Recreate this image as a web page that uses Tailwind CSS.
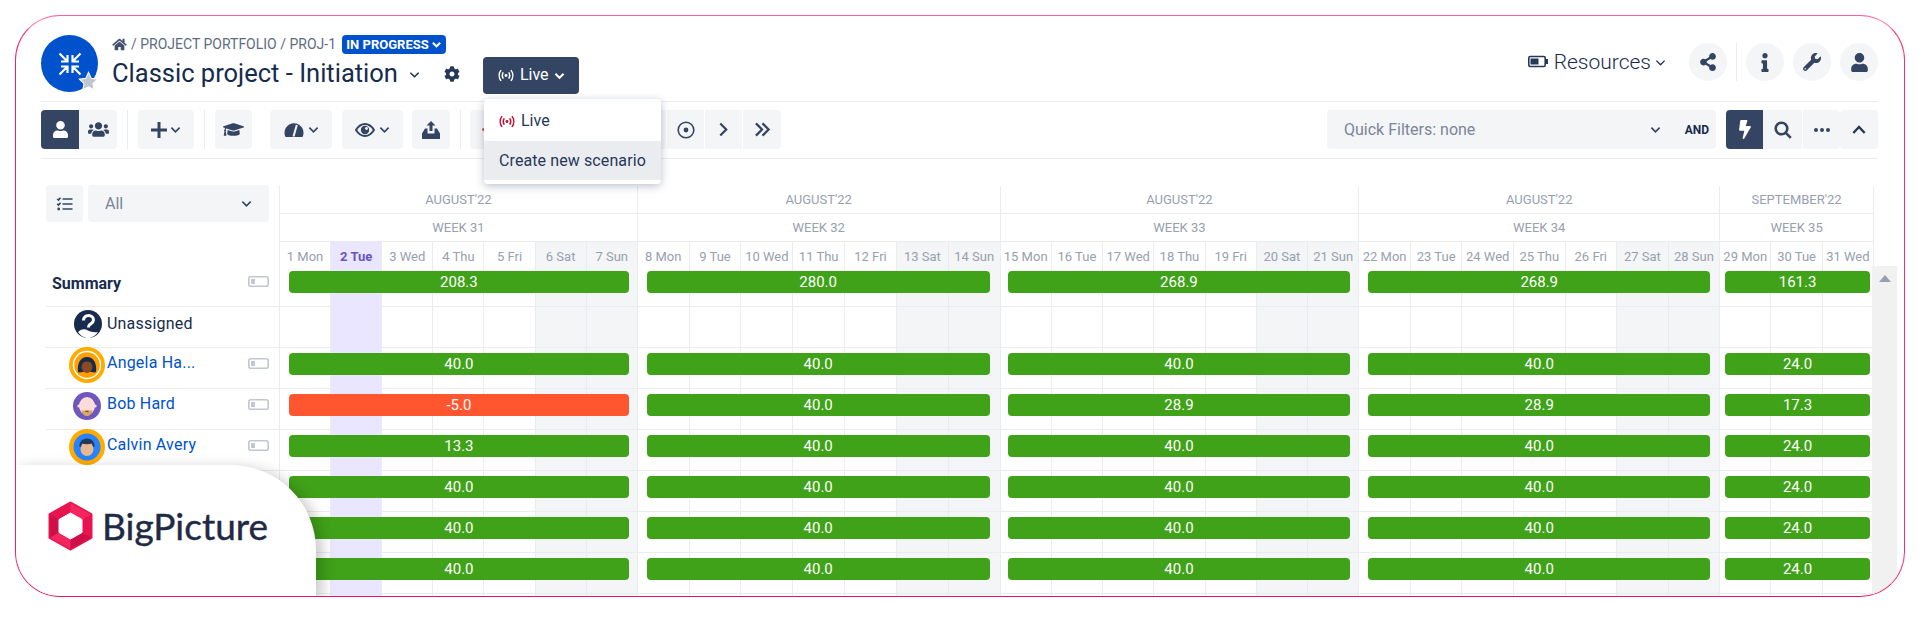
<!DOCTYPE html>
<html lang="en">
<head>
  <meta charset="UTF-8" />
  <title>Classic project - Initiation</title>
  <script src="https://cdn.jsdelivr.net/npm/@tailwindcss/browser@4"></script>
</head>
<body class="bg-white h-screen overflow-hidden font-['Roboto',sans-serif] text-[#172b4d]">

<!-- frame -->
<div class="relative ml-[15px] mt-[15px] w-[1890px] h-[582px] rounded-[45px] border border-t-[#ff5f96] border-l-[#f0206a] border-r-[#f42e76] border-b-[#ec1462] overflow-hidden">
  <div class="pl-[25px] pr-[26px]">

    <!-- top header -->
    <header class="h-[86px] border-b border-[#ebecf0] flex justify-between">
      <div class="flex pt-[19px]">
        <div class="relative w-[57px] h-[57px] rounded-full bg-[#0052cc] flex items-center justify-center">
          <svg viewBox="0 0 24 24" class="w-[24px] h-[24px]" fill="none" stroke="#fff" stroke-width="2.2">
            <path d="M1.500 1.500l7 7M9.500 3v6.500H3M22.500 1.500l-7 7M14.500 3v6.500H21M1.500 22.500l7-7M9.500 21v-6.500H3M22.500 22.500l-7-7M14.500 21v-6.500H21"/>
          </svg>
          <svg viewBox="0 0 24 24" class="absolute -right-[1px] bottom-[0px] w-[21px] h-[21px]"><path d="M12 1.500l3.200 6.900 7.300.9-5.400 5.100 1.400 7.400-6.500-3.700-6.500 3.700 1.400-7.400L1.500 9.300l7.300-.9z" fill="#c1c7d0" stroke="#fff" stroke-width="1.200"/></svg>
        </div>
        <div class="ml-[14px]">
          <div class="flex items-center h-[19px] text-[14px] text-[#5e6c84]">
            <svg viewBox="0 0 576 512" class="w-[15px] h-[13px] shrink-0" fill="#42526e"><path d="M280.37 148.26L96 300.11V464a16 16 0 0 0 16 16l112.06-.29a16 16 0 0 0 15.92-16V368a16 16 0 0 1 16-16h64a16 16 0 0 1 16 16v95.64a16 16 0 0 0 16 16.05L464 480a16 16 0 0 0 16-16V300L295.67 148.26a12.19 12.19 0 0 0-15.3 0zM571.6 251.47L488 182.56V44.05a12 12 0 0 0-12-12h-56a12 12 0 0 0-12 12v72.61L318.47 43a48 48 0 0 0-61 0L4.34 251.47a12 12 0 0 0-1.6 16.9l25.5 31A12 12 0 0 0 45.15 301l235.22-193.74a12.19 12.19 0 0 1 15.3 0L530.9 301a12 12 0 0 0 16.9-1.6l25.5-31a12 12 0 0 0-1.7-16.93z"/></svg>
            <span class="ml-[4px] whitespace-nowrap">/ PROJECT PORTFOLIO / PROJ-1</span>
            <span class="ml-[6px] h-[19px] w-[104px] shrink-0 rounded-[4px] bg-[#0052cc] text-white text-[13px] font-bold flex items-center justify-center gap-[2px] whitespace-nowrap">IN PROGRESS
              <svg viewBox="0 0 12 12" class="w-[11px] h-[11px]" fill="none" stroke="#fff" stroke-width="2.200"><path d="M2 4l4 4 4-4"/></svg>
            </span>
          </div>
          <div class="flex items-center h-[38px] mt-[2px]">
            <span class="text-[25.500px] leading-none whitespace-nowrap -mt-[2px]">Classic project - Initiation</span>
            <svg viewBox="0 0 12 12" class="ml-[11px] -mt-[2px] w-[11px] h-[11px]" fill="none" stroke="#172b4d" stroke-width="1.600"><path d="M1.500 4l4.500 4.500L10.500 4"/></svg>
            <svg viewBox="0 0 512 512" class="ml-[24px] -mt-[2px] w-[16px] h-[16px]" fill="#253858"><path d="M487.4 315.7l-42.6-24.6c4.3-23.2 4.3-47 0-70.2l42.6-24.6c4.9-2.8 7.1-8.6 5.5-14-11.1-35.6-30-67.8-54.7-94.6-3.8-4.1-10-5.1-14.8-2.3L380.8 110c-17.9-15.4-38.5-27.3-60.8-35.1V25.8c0-5.6-3.9-10.5-9.4-11.7-36.7-8.2-74.3-7.8-109.2 0-5.5 1.2-9.4 6.1-9.4 11.7V75c-22.2 7.9-42.8 19.8-60.8 35.1L88.7 85.5c-4.9-2.8-11-1.9-14.8 2.3-24.7 26.7-43.6 58.9-54.7 94.6-1.7 5.4.6 11.2 5.5 14L67.3 221c-4.3 23.2-4.3 47 0 70.2l-42.6 24.6c-4.9 2.8-7.1 8.6-5.5 14 11.1 35.6 30 67.8 54.7 94.6 3.8 4.1 10 5.1 14.8 2.3l42.6-24.6c17.9 15.4 38.5 27.3 60.8 35.1v49.2c0 5.6 3.9 10.5 9.4 11.7 36.7 8.2 74.3 7.8 109.2 0 5.5-1.2 9.4-6.1 9.4-11.7v-49.2c22.2-7.9 42.8-19.8 60.8-35.1l42.6 24.6c4.9 2.8 11 1.9 14.8-2.3 24.7-26.7 43.6-58.9 54.7-94.6 1.5-5.5-.7-11.3-5.6-14.1zM256 336c-44.1 0-80-35.9-80-80s35.9-80 80-80 80 35.9 80 80-35.9 80-80 80z"/></svg>
            <div class="relative ml-[23px] h-[37px] w-[96px] shrink-0 rounded-[4px] bg-[#344563] text-white flex items-center pl-[14px] gap-[5px]">
              <svg viewBox="0 0 20 14" class="w-[18px] h-[13px]" fill="none" stroke="#fff" stroke-width="1.700"><path d="M4.500 1C1.800 4.500 1.800 9.500 4.500 13M15.500 1c2.700 3.500 2.700 8.500 0 12M7 3.500c-1.300 2-1.300 5 0 7M13 3.500c1.300 2 1.300 5 0 7"/><circle cx="10" cy="7" r="1.600" fill="#fff" stroke="none"/></svg>
              <span class="text-[16px] leading-none">Live</span>
              <svg viewBox="0 0 12 12" class="w-[11px] h-[11px]" fill="none" stroke="#fff" stroke-width="2.200"><path d="M1.500 4l4.500 4.500L10.500 4"/></svg>
            </div>
          </div>
        </div>
      </div>

      <div class="flex items-start pt-[27px]">
        <svg viewBox="0 0 20 12" class="w-[20px] h-[13px] mt-[12px]" fill="none"><rect x="0.800" y="1" width="16.400" height="10" rx="1.500" stroke="#253858" stroke-width="1.600"/><rect x="2.500" y="3" width="8" height="6" fill="#253858"/><rect x="18" y="3.500" width="2" height="5" fill="#253858"/></svg>
        <span class="ml-[6px] text-[21px] leading-[38px] font-light">Resources</span>
        <svg viewBox="0 0 12 12" class="ml-[4px] mt-[14px] w-[11px] h-[11px]" fill="none" stroke="#172b4d" stroke-width="1.400"><path d="M1.500 4l4.500 4.500L10.500 4"/></svg>
        <div class="ml-[23px] w-[38px] h-[38px] rounded-full bg-[#f4f5f7] flex items-center justify-center">
          <svg viewBox="0 0 448 512" class="w-[16px] h-[18px]" fill="#344563"><path d="M352 320c-22.608 0-43.387 7.819-59.79 20.895l-102.486-64.054a96.551 96.551 0 0 0 0-41.683l102.486-64.054C308.613 184.181 329.392 192 352 192c53.019 0 96-42.981 96-96S405.019 0 352 0s-96 42.981-96 96c0 7.158.79 14.13 2.276 20.841L155.79 180.895C139.387 167.819 118.608 160 96 160c-53.019 0-96 42.981-96 96s42.981 96 96 96c22.608 0 43.387-7.819 59.79-20.895l102.486 64.054A96.301 96.301 0 0 0 256 416c0 53.019 42.981 96 96 96s96-42.981 96-96-42.981-96-96-96z"/></svg>
        </div>
        <div class="ml-[9px] w-px h-[38px] bg-[#ebecf0]"></div>
        <div class="ml-[9px] w-[38px] h-[38px] rounded-full bg-[#f4f5f7] flex items-center justify-center">
          <svg viewBox="0 0 192 512" class="w-[8px] h-[19px]" fill="#344563"><path d="M20 424.229h20V279.771H20c-11.046 0-20-8.954-20-20V212c0-11.046 8.954-20 20-20h112c11.046 0 20 8.954 20 20v212.229h20c11.046 0 20 8.954 20 20V492c0 11.046-8.954 20-20 20H20c-11.046 0-20-8.954-20-20v-47.771c0-11.046 8.954-20 20-20zM96 0C56.235 0 24 32.235 24 72s32.235 72 72 72 72-32.235 72-72S135.764 0 96 0z"/></svg>
        </div>
        <div class="ml-[9px] w-[38px] h-[38px] rounded-full bg-[#f4f5f7] flex items-center justify-center">
          <svg viewBox="0 0 512 512" class="w-[18px] h-[18px]" fill="#344563"><path d="M507.73 109.1c-2.24-9.03-13.54-12.09-20.12-5.51l-74.36 74.36-67.88-11.31-11.31-67.88 74.36-74.36c6.62-6.62 3.43-17.9-5.66-20.16-47.38-11.74-99.55.91-136.58 37.93-39.64 39.64-50.55 97.1-34.05 147.2L18.74 402.76c-24.99 24.99-24.99 65.51 0 90.5 24.99 24.99 65.51 24.99 90.5 0l213.21-213.21c50.12 16.71 107.47 5.68 147.37-34.22 37.07-37.07 49.7-89.32 37.91-136.73zM64 472c-13.25 0-24-10.75-24-24 0-13.26 10.75-24 24-24s24 10.74 24 24c0 13.25-10.75 24-24 24z"/></svg>
        </div>
        <div class="ml-[9px] w-[38px] h-[38px] rounded-full bg-[#f4f5f7] flex items-center justify-center">
          <svg viewBox="0 0 448 512" class="w-[17px] h-[19px]" fill="#344563"><path d="M224 256c70.7 0 128-57.3 128-128S294.7 0 224 0 96 57.3 96 128s57.3 128 128 128zm89.6 32h-16.7c-22.2 10.2-46.9 16-72.9 16s-50.6-5.8-72.9-16h-16.7C60.2 288 0 348.2 0 422.4V464c0 26.5 21.5 48 48 48h352c26.5 0 48-21.5 48-48v-41.6c0-74.2-60.2-134.4-134.4-134.4z"/></svg>
        </div>
      </div>
    </header>

    <!-- toolbar -->
    <div class="relative h-[57px] border-b border-[#ebecf0] flex justify-between pt-[8px]">
      <div class="flex h-[39px]">
        <div class="w-[38px] bg-[#344563] rounded-l-[4px] flex items-center justify-center">
          <svg viewBox="0 0 448 512" class="w-[15px] h-[19px]" fill="#fff"><path d="M224 256c70.7 0 128-57.3 128-128S294.7 0 224 0 96 57.3 96 128s57.3 128 128 128zm89.6 32h-16.7c-22.2 10.2-46.9 16-72.9 16s-50.6-5.8-72.9-16h-16.7C60.2 288 0 348.2 0 422.4V464c0 26.5 21.5 48 48 48h352c26.5 0 48-21.5 48-48v-41.6c0-74.2-60.2-134.4-134.4-134.4z"/></svg>
        </div>
        <div class="w-[38px] bg-[#f4f5f7] rounded-r-[4px] flex items-center justify-center">
          <svg viewBox="0 0 640 512" class="w-[21px] h-[17px]" fill="#344563"><path d="M96 224c35.3 0 64-28.7 64-64s-28.7-64-64-64-64 28.7-64 64 28.7 64 64 64zm448 0c35.3 0 64-28.7 64-64s-28.7-64-64-64-64 28.7-64 64 28.7 64 64 64zm32 32h-64c-17.6 0-33.5 7.1-45.1 18.6 40.3 22.1 68.9 62 75.1 109.4h66c17.7 0 32-14.3 32-32v-32c0-35.3-28.7-64-64-64zm-256 0c61.9 0 112-50.1 112-112S381.9 32 320 32 208 82.1 208 144s50.1 112 112 112zm76.8 32h-8.3c-20.8 10-43.9 16-68.5 16s-47.6-6-68.5-16h-8.3C179.6 288 128 339.6 128 403.2V432c0 26.5 21.5 48 48 48h288c26.5 0 48-21.5 48-48v-28.8c0-63.6-51.6-115.2-115.2-115.2zm-223.7-13.4C161.5 263.1 145.6 256 128 256H64c-35.3 0-64 28.7-64 64v32c0 17.7 14.3 32 32 32h65.9c6.3-47.4 34.9-87.3 75.2-109.4z"/></svg>
        </div>
        <div class="ml-[10px] w-px bg-[#ebecf0]"></div>
        <div class="ml-[10px] w-[56px] rounded-[4px] bg-[#f4f5f7] flex items-center justify-center gap-[3px]">
          <svg viewBox="0 0 16 16" class="w-[16px] h-[16px]" fill="none" stroke="#344563" stroke-width="3"><path d="M8 0v16M0 8h16"/></svg>
          <svg viewBox="0 0 12 12" class="w-[11px] h-[11px]" fill="none" stroke="#344563" stroke-width="1.800"><path d="M1.500 4l4.500 4.500L10.500 4"/></svg>
        </div>
        <div class="ml-[10px] w-px bg-[#ebecf0]"></div>
        <div class="ml-[10px] w-[37px] rounded-[4px] bg-[#f4f5f7] flex items-center justify-center">
          <svg viewBox="0 0 640 512" class="w-[21px] h-[17px]" fill="#344563"><path d="M622.34 153.2L343.4 67.5c-15.2-4.67-31.6-4.67-46.79 0L17.66 153.2c-23.54 7.23-23.54 38.36 0 45.59l48.63 14.94c-10.67 13.19-17.23 29.28-17.88 46.9C38.78 266.15 32 276.11 32 288c0 10.78 5.68 19.85 13.86 25.65L20.33 428.53C18.11 438.52 25.71 448 35.94 448h56.11c10.24 0 17.84-9.48 15.62-19.47L82.14 313.65C90.32 307.85 96 298.78 96 288c0-11.57-6.47-21.25-15.66-26.87.76-15.02 8.44-28.3 20.69-36.72L296.6 284.5c9.06 2.78 26.44 6.25 46.79 0l278.95-85.7c23.55-7.24 23.55-38.36 0-45.6zM352.79 315.09c-28.53 8.76-52.84 3.92-65.59 0l-145.02-44.55L128 384c0 35.35 85.96 64 192 64s192-28.65 192-64l-14.18-113.47-145.03 44.56z"/></svg>
        </div>
        <div class="ml-[18px] w-[62px] rounded-[4px] bg-[#f4f5f7] flex items-center justify-center gap-[4px]">
          <svg viewBox="0 0 20 15" class="w-[20px] h-[15px]"><path d="M1.500 15A9.500 9.500 0 1 1 18.500 15Z" fill="#344563"/><path d="M9.500 14.500L12.800 3" stroke="#f4f5f7" stroke-width="2"/></svg>
          <svg viewBox="0 0 12 12" class="w-[11px] h-[11px]" fill="none" stroke="#344563" stroke-width="1.800"><path d="M1.500 4l4.500 4.500L10.500 4"/></svg>
        </div>
        <div class="ml-[10px] w-[61px] rounded-[4px] bg-[#f4f5f7] flex items-center justify-center gap-[4px]">
          <svg viewBox="0 0 20 14" class="w-[20px] h-[14px]" fill="none"><path d="M1 7c2.500-4 5.500-6 9-6s6.500 2 9 6c-2.500 4-5.500 6-9 6S3.500 11 1 7z" stroke="#344563" stroke-width="2"/><circle cx="10" cy="7" r="4.200" fill="#344563"/><circle cx="11.500" cy="5.500" r="1.400" fill="#f4f5f7"/></svg>
          <svg viewBox="0 0 12 12" class="w-[11px] h-[11px]" fill="none" stroke="#344563" stroke-width="1.800"><path d="M1.500 4l4.500 4.500L10.500 4"/></svg>
        </div>
        <div class="ml-[9px] w-[38px] rounded-[4px] bg-[#f4f5f7] flex items-center justify-center">
          <svg viewBox="0 0 18 18" class="w-[18px] h-[18px]" fill="#344563"><path d="M9 0l4.500 4.500h-3v5.500h-3V4.500h-3z"/><path d="M3 7.500h2.500V12.500h7V7.500H15l3 5V18H0v-5.500z"/></svg>
        </div>
        <div class="ml-[10px] w-px bg-[#ebecf0]"></div>
        <div class="ml-[9px] w-[196px] rounded-l-[4px] bg-[#f4f5f7] flex items-center pl-[12px]">
          <span class="w-[3px] h-[3px] rounded-full bg-[#e5553b]"></span>
        </div>
        <div class="ml-[1px] w-[37px] bg-[#f4f5f7] flex items-center justify-center">
          <svg viewBox="0 0 18 18" class="w-[18px] h-[18px]" fill="none" stroke="#344563" stroke-width="1.600"><circle cx="9" cy="9" r="7.800"/><circle cx="9" cy="9" r="2.400" fill="#344563" stroke="none"/></svg>
        </div>
        <div class="ml-[1px] w-[37px] bg-[#f4f5f7] flex items-center justify-center">
          <svg viewBox="0 0 12 16" class="w-[11px] h-[15px]" fill="none" stroke="#344563" stroke-width="2.400"><path d="M2.500 1.500L9 8l-6.500 6.500"/></svg>
        </div>
        <div class="ml-[1px] w-[38px] rounded-r-[4px] bg-[#f4f5f7] flex items-center justify-center">
          <svg viewBox="0 0 18 16" class="w-[17px] h-[15px]" fill="none" stroke="#344563" stroke-width="2.400"><path d="M2 1.500L8.500 8 2 14.500M9 1.500L15.500 8 9 14.500"/></svg>
        </div>
      </div>

      <div class="flex h-[39px]">
        <div class="w-[389px] rounded-[4px] bg-[#f4f5f7] flex items-center pl-[17px] pr-[7px]">
          <span class="text-[16px] text-[#7a869a] whitespace-nowrap">Quick Filters: none</span>
          <svg viewBox="0 0 12 12" class="ml-auto w-[11px] h-[11px]" fill="none" stroke="#344563" stroke-width="1.800"><path d="M1.500 4l4.500 4.500L10.500 4"/></svg>
          <span class="ml-[24px] text-[12px] font-bold">AND</span>
        </div>
        <div class="ml-[10px] w-[37px] rounded-l-[4px] bg-[#344563] flex items-center justify-center">
          <svg viewBox="0 0 320 512" class="w-[12px] h-[19px]" fill="#fff"><path d="M296 160H180.600l42.600-129.800C227.200 15 215.700 0 200 0H56C44 0 33.800 8.900 32.200 20.800l-32 240C-1.700 275.200 9.500 288 24 288h118.700L96.600 482.500c-3.600 15.200 8 29.500 23.300 29.500 8.400 0 16.400-4.400 20.800-12l176-304c9.300-15.900-2.200-36-20.700-36z"/></svg>
        </div>
        <div class="w-[39px] bg-[#f4f5f7] flex items-center justify-center">
          <svg viewBox="0 0 18 18" class="w-[18px] h-[18px]" fill="none" stroke="#344563" stroke-width="2.600"><circle cx="7.500" cy="7.500" r="5.800"/><path d="M11.800 11.800l5 5"/></svg>
        </div>
        <div class="ml-px w-[37px] rounded-r-[4px] bg-[#f4f5f7] flex items-center justify-center gap-[2px]">
          <span class="w-[4px] h-[4px] rounded-full bg-[#344563]"></span><span class="w-[4px] h-[4px] rounded-full bg-[#344563]"></span><span class="w-[4px] h-[4px] rounded-full bg-[#344563]"></span>
        </div>
        <div class="w-[38px] rounded-[4px] bg-[#f4f5f7] flex items-center justify-center">
          <svg viewBox="0 0 16 12" class="w-[14px] h-[11px]" fill="none" stroke="#253858" stroke-width="2.600"><path d="M1.500 10L8 3l6.500 7"/></svg>
        </div>
      </div>

      <!-- scenario dropdown -->
      <div class="absolute z-20 left-[443px] -top-[3px] w-[177px] h-[85px] bg-white rounded-[4px] shadow-[0_2px_8px_rgba(9,30,66,0.28)] pb-[4px]">
        <div class="h-[42px] flex items-center pt-[2px] pl-[14px] gap-[5px]">
          <svg viewBox="0 0 20 14" class="w-[18px] h-[13px]" fill="none" stroke="#c9082f" stroke-width="1.700"><path d="M4.500 1C1.800 4.500 1.800 9.500 4.500 13M15.500 1c2.700 3.500 2.700 8.500 0 12M7 3.500c-1.300 2-1.300 5 0 7M13 3.500c1.300 2 1.300 5 0 7"/><circle cx="10" cy="7" r="1.600" fill="#c9082f" stroke="none"/></svg>
          <span class="text-[16px] text-[#253858]">Live</span>
        </div>
        <div class="h-[39px] bg-[#ebecf0] flex items-center pl-[15px] text-[16px] tracking-[0.1px] text-[#253858] whitespace-nowrap">Create new scenario</div>
      </div>
    </div>

    <!-- timeline -->
    <div class="relative ml-[5px] mt-[26px] flex">
      <!-- names column -->
      <div class="w-[233px] shrink-0">
        <div class="flex gap-[5px] h-[37px]">
          <div class="w-[37px] rounded-[4px] bg-[#f4f5f7] flex items-center justify-center">
            <svg viewBox="0 0 16 14" class="w-[17px] h-[14px]" fill="none" stroke="#344563" stroke-width="1.700"><path d="M6 2h10M6 7h10M6 12h10M.8 1.800l1.200 1.200L4 .8M.8 6.800L2 8l2-2.200"/><circle cx="2.200" cy="12" r="1.400" fill="#344563" stroke="none"/></svg>
          </div>
          <div class="w-[181px] rounded-[4px] bg-[#f4f5f7] flex items-center justify-between pl-[17px] pr-[17px]">
            <span class="text-[16px] text-[#7a869a]">All</span>
            <svg viewBox="0 0 12 12" class="w-[11px] h-[11px]" fill="none" stroke="#344563" stroke-width="1.800"><path d="M1.500 4l4.500 4.500L10.500 4"/></svg>
          </div>
        </div>
        <div class="mt-[44px]">
          <div class="h-[41px] border-b border-[#ebecf0] flex items-center pl-[6px] pr-[10px] pb-[4px] justify-between">
            <span class="text-[16px] font-bold">Summary</span>
            <svg viewBox="0 0 21 11" class="w-[21px] h-[11px] -mt-[6px]" fill="none"><rect x="0.800" y="0.800" width="19.400" height="9.400" rx="2" stroke="#c1c7d0" stroke-width="1.600"/><rect x="3" y="3" width="4" height="5" fill="#c1c7d0"/></svg>
          </div>
          <div class="h-[41px] border-b border-[#ebecf0] flex items-center pl-[23px] pb-[7px]">
            <div class="w-[36px] flex justify-center pl-[2px]">
              <svg viewBox="0 0 28 28" class="w-[28px] h-[28px]"><circle cx="14" cy="14" r="14" fill="#172b4d"/><path d="M4 22c4-3.500 7-3 10-1.500s6 2 10 1.500c-2.500 3.500-6 6-10 6s-7.500-2.500-10-6z" fill="#fff"/><path d="M9.500 10.500C9.500 7.500 11.500 5.500 14.500 5.500s5 2 5 4.500-2.500 3.500-4 4.800c-.7.700-1 1.400-1 2.700" fill="none" stroke="#fff" stroke-width="3"/></svg>
            </div>
            <span class="ml-[2px] text-[16px] tracking-[0.2px]">Unassigned</span>
          </div>
          <div class="h-[41px] border-b border-[#ebecf0] flex items-center pl-[23px] pr-[10px] pb-[7px]">
            <svg viewBox="0 0 36 36" class="w-[36px] h-[36px]"><circle cx="18" cy="18" r="18" fill="#ffab00"/><circle cx="18" cy="18" r="13.500" fill="#ff9f00" stroke="#fff" stroke-width="1.400"/><path d="M9 25c-1-8 2-15 9-15s10 7 9 15c-2 1-3 0-4 0H13c-1 0-2 1-4 0z" fill="#172b4d"/><ellipse cx="18" cy="20" rx="5.500" ry="6" fill="#8a4a24"/><path d="M13 16c2-2 8-2 10 0l-1-4h-8z" fill="#172b4d"/></svg>
            <span class="ml-[2px] -mt-[3px] text-[16px] tracking-[0.2px] text-[#0052cc] whitespace-nowrap">Angela Ha...</span>
            <svg viewBox="0 0 21 11" class="ml-auto -mt-[3px] w-[21px] h-[11px]" fill="none"><rect x="0.800" y="0.800" width="19.400" height="9.400" rx="2" stroke="#c1c7d0" stroke-width="1.600"/><rect x="3" y="3" width="4" height="5" fill="#c1c7d0"/></svg>
          </div>
          <div class="h-[41px] border-b border-[#ebecf0] flex items-center pl-[23px] pr-[10px] pb-[7px]">
            <div class="w-[36px] flex justify-center">
              <svg viewBox="0 0 28 28" class="w-[28px] h-[28px]"><circle cx="14" cy="14" r="14" fill="#6e58bd"/><ellipse cx="14" cy="14" rx="8" ry="9" fill="#fbdcd8"/><circle cx="5.800" cy="14" r="1.500" fill="#fbdcd8"/><circle cx="22.200" cy="14" r="1.500" fill="#fbdcd8"/><path d="M8.500 18c2 1.500 3.500 0 5.500 0s3.500 1.500 5.500 0c-.5 4-3 6-5.500 6s-5-2-5.500-6z" fill="#dba468"/><path d="M12.500 19.500h3" stroke="#7a4a2a" stroke-width="1"/></svg>
            </div>
            <span class="ml-[2px] -mt-[3px] text-[16px] tracking-[0.2px] text-[#0052cc]">Bob Hard</span>
            <svg viewBox="0 0 21 11" class="ml-auto -mt-[3px] w-[21px] h-[11px]" fill="none"><rect x="0.800" y="0.800" width="19.400" height="9.400" rx="2" stroke="#c1c7d0" stroke-width="1.600"/><rect x="3" y="3" width="4" height="5" fill="#c1c7d0"/></svg>
          </div>
          <div class="h-[41px] border-b border-[#ebecf0] flex items-center pl-[23px] pr-[10px] pb-[7px]">
            <svg viewBox="0 0 36 36" class="w-[36px] h-[36px]"><circle cx="18" cy="18" r="18" fill="#ffab00"/><circle cx="18" cy="18" r="13.500" fill="#2684ff"/><ellipse cx="18" cy="20" rx="6.500" ry="7" fill="#e9b88e"/><path d="M10.500 18c-.5-5 3-8.500 7.500-8.500s8 3 7.500 8.500l-1.500-.5-1-3c-3 1-7 1-10 0l-1 3z" fill="#253858"/></svg>
            <span class="ml-[2px] -mt-[3px] text-[16px] tracking-[0.2px] text-[#0052cc]">Calvin Avery</span>
            <svg viewBox="0 0 21 11" class="ml-auto -mt-[3px] w-[21px] h-[11px]" fill="none"><rect x="0.800" y="0.800" width="19.400" height="9.400" rx="2" stroke="#c1c7d0" stroke-width="1.600"/><rect x="3" y="3" width="4" height="5" fill="#c1c7d0"/></svg>
          </div>
        </div>
      </div>

      <!-- calendar column -->
      <div class="w-[1595px] shrink-0 border-l border-[#ebecf0] pt-px">
        <div class="flex text-[13px] text-[#97a0af]">
          <div class="w-[358px]"><div class="h-[28px] border-b border-r border-[#ebecf0] flex items-center justify-center">AUGUST'22</div><div class="h-[28px] border-b border-r border-[#ebecf0] flex items-center justify-center">WEEK 31</div></div>
          <div class="w-[363px]"><div class="h-[28px] border-b border-r border-[#ebecf0] flex items-center justify-center">AUGUST'22</div><div class="h-[28px] border-b border-r border-[#ebecf0] flex items-center justify-center">WEEK 32</div></div>
          <div class="w-[359px]"><div class="h-[28px] border-b border-r border-[#ebecf0] flex items-center justify-center">AUGUST'22</div><div class="h-[28px] border-b border-r border-[#ebecf0] flex items-center justify-center">WEEK 33</div></div>
          <div class="w-[361px]"><div class="h-[28px] border-b border-r border-[#ebecf0] flex items-center justify-center">AUGUST'22</div><div class="h-[28px] border-b border-r border-[#ebecf0] flex items-center justify-center">WEEK 34</div></div>
          <div class="w-[154px]"><div class="h-[28px] border-b border-r border-[#ebecf0] flex items-center justify-center">SEPTEMBER'22</div><div class="h-[28px] border-b border-r border-[#ebecf0] flex items-center justify-center">WEEK 35</div></div>
        </div>
        <div id="days" class="flex h-[24px]"></div>
        <div id="rows"></div>
      </div>

      <!-- scrollbar -->
      <div class="absolute left-[1826px] top-[81px] w-[25px] h-[340px] bg-[#f1f1f2] flex justify-center pt-[9px]">
        <svg viewBox="0 0 12 7" class="w-[12px] h-[7px]"><path d="M6 0l6 7H0z" fill="#97a0af"/></svg>
      </div>
    </div>
  </div>

  <!-- logo card -->
  <div class="absolute z-30 left-0 bottom-0 w-[300px] h-[131px] bg-white rounded-tr-[85px] shadow-[6px_3px_14px_rgba(0,0,0,0.22)] flex items-center pl-[32px] pb-[10px]">
    <svg viewBox="0 0 45 50" class="w-[45px] h-[50px] shrink-0">
      <path d="M22.500 2L43 13.500v23L22.500 48 2 36.500v-23z" fill="#e8144f" stroke="#e8144f" stroke-width="3" stroke-linejoin="round"/>
      <path d="M22.500 2L43 13.500 34 18.500 22.500 12zM2 36.500L11 31.500l11.500 6.500v10z" fill="#f5265f"/>
      <path d="M2 13.500l9 5V31.500L2 36.500zM43 36.500L34 31.500 22.500 38v10z" fill="#cf0f48"/>
      <path d="M22.500 12L34 18.500v13L22.500 38 11 31.500v-13z" fill="#fff" stroke="#fff" stroke-width="1" stroke-linejoin="round"/>
    </svg>
    <span class="ml-[9px] text-[37px] leading-none font-['Lato',sans-serif] text-[#1f2a44] [-webkit-text-stroke:0.4px_#1f2a44]">BigPicture</span>
  </div>
</div>

<script>
  // calendar data
  const weeks = [
    { cls: 'w-[358px]', bar: 'left-[9px] right-[9px]', first: 1, n: 7 },
    { cls: 'w-[363px]', bar: 'left-[9px] right-[11px]', first: 8, n: 7 },
    { cls: 'w-[359px]', bar: 'left-[7px] right-[9px]', first: 15, n: 7 },
    { cls: 'w-[361px]', bar: 'left-[9px] right-[10px]', first: 22, n: 7 },
    { cls: 'w-[154px]', bar: 'left-[5px] right-[4px]', first: 29, n: 3 },
  ];
  const names = ['Mon', 'Tue', 'Wed', 'Thu', 'Fri', 'Sat', 'Sun'];
  const rows = [
    ['208.3', '280.0', '268.9', '268.9', '161.3'],
    null,
    ['40.0', '40.0', '40.0', '40.0', '24.0'],
    ['-5.0', '40.0', '28.9', '28.9', '17.3'],
    ['13.3', '40.0', '40.0', '40.0', '24.0'],
    ['40.0', '40.0', '40.0', '40.0', '24.0'],
    ['40.0', '40.0', '40.0', '40.0', '24.0'],
    ['40.0', '40.0', '40.0', '40.0', '24.0'],
    null,
  ];

  function cellTone(date, i) {
    if (date === 2) return 'bg-[#eae6ff]';
    if (i > 4) return 'bg-[#f4f5f7]';
    return '';
  }

  let daysHtml = '';
  weeks.forEach(w => {
    daysHtml += `<div class="${w.cls} flex">`;
    for (let i = 0; i < w.n; i++) {
      const date = w.first + i;
      const label = date + ' ' + names[i];
      const text = date === 2 ? 'font-bold text-[#6554c0]' : 'text-[#97a0af]';
      daysHtml += `<div class="flex-1 min-w-0 border-r border-[#ebecf0] text-center text-[13px] leading-[20px] pt-[5px] whitespace-nowrap ${text} ${cellTone(date, i)}">${label}</div>`;
    }
    daysHtml += '</div>';
  });
  document.getElementById('days').innerHTML = daysHtml;

  let rowsHtml = '';
  rows.forEach(vals => {
    rowsHtml += '<div class="flex h-[41px]">';
    weeks.forEach((w, k) => {
      rowsHtml += `<div class="${w.cls} relative flex">`;
      for (let i = 0; i < w.n; i++) {
        const date = w.first + i;
        const line = date === 2 ? 'border-b-[#eae6ff]' : 'border-b-[#ebecf0]';
        rowsHtml += `<div class="flex-1 min-w-0 border-r border-b border-r-[#ebecf0] ${line} ${cellTone(date, i)}"></div>`;
      }
      if (vals) {
        const bg = vals[k] === '-5.0' ? 'bg-[#ff5630]' : 'bg-[#40a219]';
        rowsHtml += `<div class="absolute top-[5px] h-[22px] ${w.bar} ${bg} rounded-[4px] text-white text-[15px] flex items-center justify-center">${vals[k]}</div>`;
      }
      rowsHtml += '</div>';
    });
    rowsHtml += '</div>';
  });
  document.getElementById('rows').innerHTML = rowsHtml;
</script>
</body>
</html>
